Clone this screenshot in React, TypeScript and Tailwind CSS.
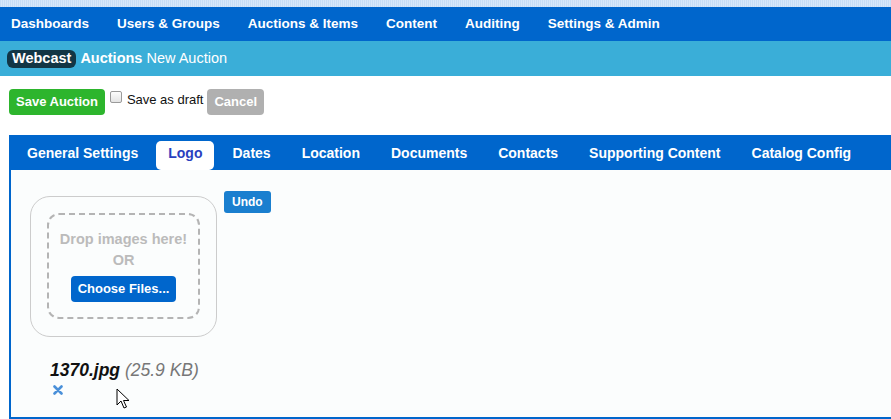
import React from 'react'

const navItems = ['Dashboards', 'Users & Groups', 'Auctions & Items', 'Content', 'Auditing', 'Settings & Admin']

const tabs = [
  'General Settings',
  'Logo',
  'Dates',
  'Location',
  'Documents',
  'Contacts',
  'Supporting Content',
  'Catalog Config',
]

function Cursor() {
  return (
    <svg className="absolute left-[116px] top-[388px]" width="14" height="22" viewBox="0 0 14 22">
      <path
        d="M1 1 L1 17 L5 13 L8 20 L10.5 19 L7.5 12.5 L13 12.5 Z"
        fill="#fff"
        stroke="#000"
        strokeWidth="1"
        strokeLinejoin="round"
      />
    </svg>
  )
}

export default function App() {
  return (
    <div className="relative w-[891px] h-[419px] overflow-hidden bg-white font-['Liberation_Sans',Arial,sans-serif]">
      {/* top strip */}
      <div className="h-[7px] bg-[repeating-linear-gradient(90deg,#c6def6_0_1px,#d7e8fa_1px_2px)]" />

      {/* main nav */}
      <nav className="h-[34px] bg-[#0066cc] flex items-center pl-[11px] gap-[28px]">
        {navItems.map((item) => (
          <span key={item} className="text-white font-bold text-[13.5px] leading-none">
            {item}
          </span>
        ))}
      </nav>

      {/* breadcrumb */}
      <div className="h-[35px] bg-[#3aaed8] flex items-center pl-[7px] gap-[4px] text-white text-[14.5px]">
        <span className="bg-[#123645] rounded-[6px] px-[5px] h-[18px] flex items-center font-bold leading-none">
          Webcast
        </span>
        <span className="font-bold">Auctions</span>
        <span>New Auction</span>
      </div>

      {/* actions */}
      <div className="flex items-start pl-[9px] pt-[13px]">
        <button className="h-[26px] px-[7px] rounded-[4px] bg-[#2db52d] text-white font-bold text-[13px]">
          Save Auction
        </button>
        <span className="ml-[5px] mt-[2px] w-[12px] h-[12px] rounded-[2px] border border-[#9a9a9a] bg-gradient-to-b from-[#fdfdfd] to-[#e4e4e4]" />
        <span className="ml-[5px] mt-[4px] text-[13px] leading-none text-[#111]">Save as draft</span>
        <button className="ml-[4px] h-[26px] px-[7px] rounded-[4px] bg-[#b0b0b0] text-white font-bold text-[13px]">
          Cancel
        </button>
      </div>

      {/* tab panel */}
      <div className="mt-[20px] ml-[9px] w-[900px] h-[284px] border-l-2 border-b-2 border-[#0066cc] bg-[#fbfdfd]">
        <div className="h-[35px] bg-[#0066cc] flex items-end pl-[1px] gap-[1px]">
          {tabs.map((tab) =>
            tab === 'Logo' ? (
              <span
                key={tab}
                className="mx-[2px] h-[29px] px-[12px] pt-[4px] rounded-[5px] bg-white text-[#2a3fbf] font-bold text-[14px] leading-[16px]"
              >
                {tab}
              </span>
            ) : (
              <span key={tab} className="h-[29px] px-[15px] pt-[4px] text-white font-bold text-[14px] leading-[16px]">
                {tab}
              </span>
            )
          )}
        </div>

        <div className="flex items-start pl-[19px] pt-[21px]">
          {/* dropzone */}
          <div className="mt-[5px] w-[187px] h-[141px] rounded-[20px] border border-[#cccccc] bg-[#fbfdfd] p-[16px]">
            <div className="h-[106px] rounded-[12px] border-2 border-dashed border-[#b4b4b4] flex flex-col items-center pt-[15px]">
              <span className="text-[#bbbbbb] font-bold text-[14.5px] leading-[18px]">Drop images here!</span>
              <span className="text-[#bbbbbb] font-bold text-[14.5px] leading-[18px] mt-[3px]">OR</span>
              <button className="mt-[7px] h-[26px] px-[7px] rounded-[4px] bg-[#0066cc] text-white font-bold text-[13px]">
                Choose Files...
              </button>
            </div>
          </div>

          <button className="ml-[7px] h-[22px] px-[8px] rounded-[3px] bg-[#1a7fcf] text-white font-bold text-[12px]">
            Undo
          </button>
        </div>

        {/* uploaded file */}
        <div className="pl-[39px] pt-[23px]">
          <div className="text-[17.5px] italic leading-[20px]">
            <span className="font-bold text-[#111]">1370.jpg</span>{' '}
            <span className="text-[#777]">(25.9 KB)</span>
          </div>
          <svg className="mt-[5px] ml-[3px]" width="10" height="10" viewBox="0 0 10 10">
            <path d="M1.5 1.5 L8.5 8.5 M8.5 1.5 L1.5 8.5" stroke="#4a90d9" strokeWidth="2.6" strokeLinecap="round" />
          </svg>
        </div>
      </div>

      <Cursor />
    </div>
  )
}
